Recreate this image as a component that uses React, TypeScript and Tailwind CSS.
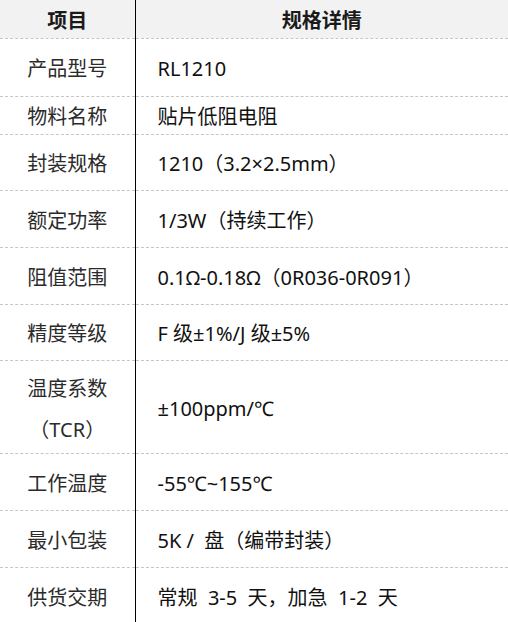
import React from "react";

const rows: { label: React.ReactNode; value: string; h: string }[] = [
  { label: "产品型号", value: "RL1210", h: "h-[58px]" },
  { label: "物料名称", value: "贴片低阻电阻", h: "h-[38px]" },
  { label: "封装规格", value: "1210（3.2×2.5mm）", h: "h-[56px]" },
  { label: "额定功率", value: "1/3W（持续工作）", h: "h-[57px]" },
  { label: "阻值范围", value: "0.1Ω-0.18Ω（0R036-0R091）", h: "h-[57px]" },
  { label: "精度等级", value: "F 级±1%/J 级±5%", h: "h-[56px]" },
  {
    label: (
      <span className="leading-[41px]">
        温度系数
        <br />
        （TCR）
      </span>
    ),
    value: "±100ppm/℃",
    h: "h-[93px]",
  },
  { label: "工作温度", value: "-55℃~155℃", h: "h-[57px]" },
  { label: "最小包装", value: "5K /  盘（编带封装）", h: "h-[57px]" },
  { label: "供货交期", value: "常规  3-5  天，加急  1-2  天", h: "h-[57px]" },
];

const App: React.FC = () => {
  return (
    <div className="w-[508px] h-[622px] overflow-hidden bg-white font-['Noto_Sans','Noto_Sans_CJK_SC',sans-serif] text-[20px]">
      <table className="w-full border-collapse table-fixed">
        <colgroup>
          <col className="w-[135px]" />
          <col />
        </colgroup>
        <thead>
          <tr className="h-[38px] bg-[#f2f2f2]">
            <th className="border-r border-black text-center font-bold text-[#1a1a1a] leading-none pt-[4px]">
              项目
            </th>
            <th className="text-center font-bold text-[#1a1a1a] leading-none pt-[4px]">
              规格详情
            </th>
          </tr>
        </thead>
        <tbody>
          {rows.map((r, i) => (
            <tr key={i} className={`${r.h} border-t border-dashed border-[#c6c6c6]`}>
              <td className="border-r border-solid border-black text-center text-[#2b2b2b] leading-[26px] pt-[4px]">
                {r.label}
              </td>
              <td className="pl-[22px] text-[#111] whitespace-pre leading-[26px] pt-[4px]">
                {r.value}
              </td>
            </tr>
          ))}
        </tbody>
      </table>
    </div>
  );
};

export default App;
